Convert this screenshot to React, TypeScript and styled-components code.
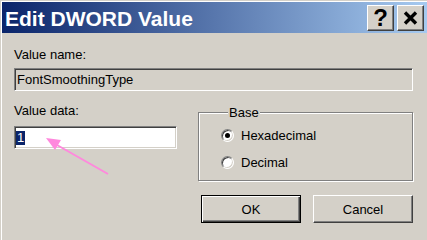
import styled, { createGlobalStyle } from "styled-components";

const GlobalStyle = createGlobalStyle`
  html, body {
    margin: 0;
    padding: 0;
    background: #d4d0c8;
  }
  * { box-sizing: border-box; }
`;

const Page = styled.div`
  position: relative;
  width: 427px;
  height: 240px;
  overflow: hidden;
  background: #d4d0c8;
  font-family: "Liberation Sans", Arial, sans-serif;
  font-size: 13px;
  color: #000;
`;

const Frame = styled.div`
  width: 432px;
  height: 240px;
  border-top: 1px solid #d4d0c8;
  border-left: 1px solid #d4d0c8;
  box-shadow: inset 1px 1px #fff;
  padding: 1px 0 0 1px;
  display: flex;
  flex-direction: column;
`;

const TitleBar = styled.div`
  height: 31px;
  width: 425px;
  display: flex;
  align-items: center;
  padding: 0 3px 0 3px;
  background: linear-gradient(to right, #0a246a, #a6caf0);
`;

const Title = styled.div`
  flex: 1;
  color: #fff;
  font-weight: bold;
  font-size: 21px;
  line-height: 31px;
  padding-top: 2px;
`;

const CaptionButton = styled.div`
  width: 27px;
  height: 26px;
  margin-left: 3px;
  background: #d4d0c8;
  border: 1px solid;
  border-color: #fff #404040 #404040 #fff;
  box-shadow: inset -1px -1px #808080;
  display: flex;
  align-items: center;
  justify-content: center;
  font-weight: bold;
  font-size: 24px;
  line-height: 1;
  padding-top: 1px;
`;

const Body = styled.div`
  padding: 14px 14px 0 12px;
  width: 425px;
  display: flex;
  flex-direction: column;
`;

const Label = styled.div`
  line-height: 15px;
  height: 15px;
`;

const Field = styled.div<{ $white?: boolean; $width?: number }>`
  height: 23px;
  width: ${(p) => (p.$width ? `${p.$width}px` : "100%")};
  border: 1px solid;
  border-color: #808080 #fff #fff #808080;
  box-shadow: inset 1px 1px #404040, inset -1px -1px #d4d0c8;
  background: ${(p) => (p.$white ? "#fff" : "#d4d0c8")};
  display: flex;
  align-items: center;
  padding: 0 0 0 2px;
  line-height: 19px;
`;

const NameLabel = styled(Label)`
  margin-bottom: 6px;
`;

const DataRow = styled.div`
  display: flex;
  gap: 21px;
  margin-top: 12px;
`;

const DataColumn = styled.div`
  display: flex;
  flex-direction: column;
  gap: 8px;
  width: 163px;
`;

const Selected = styled.span`
  background: #0a246a;
  color: #fff;
  line-height: 14px;
  padding: 0 1px;
  margin-left: -1px;
  width: 9px;
  margin-top: 1px;
`;

const Group = styled.fieldset`
  margin: 2px 0 0 0;
  width: 215px;
  height: 76px;
  padding: 6px 0 0 22px;
  border: 1px solid #808080;
  box-shadow: inset 1px 1px #fff, 1px 1px #fff;
  display: flex;
  flex-direction: column;
  gap: 10px;
`;

const Legend = styled.legend`
  padding: 0 1px;
  margin-left: 7px;
  line-height: 15px;
  background: #d4d0c8;
`;

const RadioRow = styled.div`
  display: flex;
  align-items: center;
  gap: 7px;
  height: 17px;
  padding-top: 1px;
`;

const RadioCircle = styled.span<{ $checked?: boolean }>`
  width: 13px;
  height: 13px;
  border-radius: 50%;
  border: 1px solid;
  border-color: #808080 #fff #fff #808080;
  box-shadow: inset 1px 1px #404040, inset -1px -1px #d4d0c8;
  background: #fff;
  display: flex;
  align-items: center;
  justify-content: center;
  &::after {
    content: "";
    width: 5px;
    height: 5px;
    border-radius: 50%;
    background: ${(p) => (p.$checked ? "#000" : "transparent")};
  }
`;

const ButtonRow = styled.div`
  display: flex;
  justify-content: flex-end;
  gap: 12px;
  margin-top: 14px;
`;

const Button = styled.div<{ $default?: boolean }>`
  width: 100px;
  height: 28px;
  display: flex;
  align-items: center;
  justify-content: center;
  border: 1px solid;
  border-color: ${(p) =>
    p.$default ? "#000" : "#fff #404040 #404040 #fff"};
  box-shadow: ${(p) =>
    p.$default
      ? "inset 1px 1px #fff, inset -1px -1px #404040, inset -2px -2px #808080"
      : "inset -1px -1px #808080"};
  background: #d4d0c8;
  padding-top: 1px;
`;

const Arrow = styled.svg`
  position: absolute;
  left: 0;
  top: 0;
  pointer-events: none;
`;

export default function App() {
  return (
    <Page>
      <GlobalStyle />
      <Frame>
        <TitleBar>
          <Title>Edit DWORD Value</Title>
          <CaptionButton>?</CaptionButton>
          <CaptionButton>
            <svg width="15" height="14" viewBox="0 0 15 14">
              <path d="M2 1.5 L13 12.5 M13 1.5 L2 12.5" stroke="#000" strokeWidth="3.4" />
            </svg>
          </CaptionButton>
        </TitleBar>
        <Body>
          <NameLabel>Value name:</NameLabel>
          <Field $width={399}>FontSmoothingType</Field>
          <DataRow>
            <DataColumn>
              <Label>Value data:</Label>
              <Field $white $width={163}>
                <Selected>1</Selected>
              </Field>
            </DataColumn>
            <Group>
              <Legend>Base</Legend>
              <RadioRow>
                <RadioCircle $checked />
                Hexadecimal
              </RadioRow>
              <RadioRow>
                <RadioCircle />
                Decimal
              </RadioRow>
            </Group>
          </DataRow>
          <ButtonRow>
            <Button $default>OK</Button>
            <Button>Cancel</Button>
          </ButtonRow>
        </Body>
      </Frame>
      <Arrow width="427" height="240" viewBox="0 0 427 240">
        <line x1="108" y1="174" x2="57" y2="145" stroke="#ff88dd" strokeWidth="2" />
        <polygon points="46,138 61,140 55,150" fill="#ff88dd" />
      </Arrow>
    </Page>
  );
}
